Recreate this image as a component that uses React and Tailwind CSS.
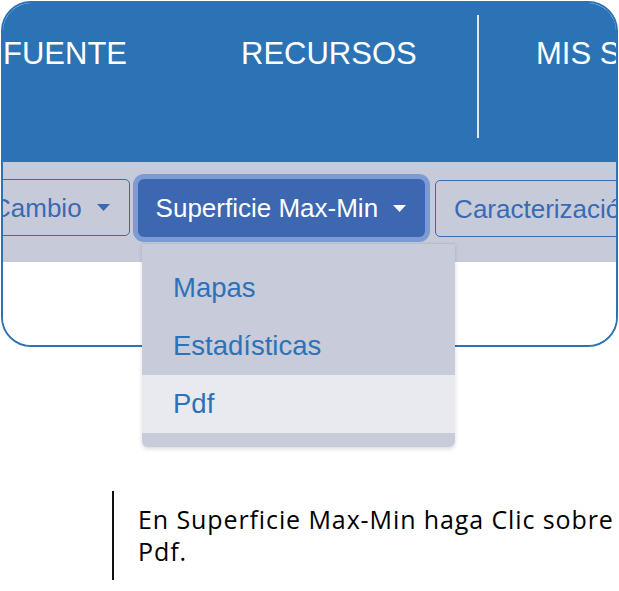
import React from 'react';

const Caret = ({ color }) => (
  <svg width="13" height="7" viewBox="0 0 13 7" className="shrink-0">
    <polygon points="0,0 13,0 6.5,7" fill={color} />
  </svg>
);

export default function App() {
  const menu = ['Mapas', 'Estadísticas', 'Pdf'];

  return (
    <div className="relative w-[619px] h-[591px] bg-white overflow-hidden font-['Liberation_Sans',Arial,sans-serif]">
      {/* tarjeta con el menú principal */}
      <div className="ml-[1px] mt-[1px] w-[617px] h-[346px] rounded-[30px] border-2 border-[#2a73b8] overflow-hidden flex flex-col">
        <div className="h-[159px] shrink-0 bg-[#2b73b4] flex items-start text-white text-[31px] leading-none whitespace-nowrap">
          <span className="w-[238px] shrink-0 mt-[35px]">FUENTE</span>
          <span className="w-[236px] shrink-0 mt-[35px]">RECURSOS</span>
          <span className="w-[2px] h-[123px] mt-[12px] bg-[#dfe8f2] shrink-0"></span>
          <span className="ml-[57px] shrink-0 mt-[35px]">MIS SISTEMAS</span>
        </div>

        <div className="h-[100px] shrink-0 bg-[#c7cbd9] flex items-start whitespace-nowrap text-[26px] leading-none">
          <button className="mt-[17px] -ml-[30px] h-[57px] flex items-center pl-[18px] pr-[19px] border border-[#3d68b2] rounded-[5px] text-[#3b69b3] shrink-0 font-['Liberation_Sans',Arial,sans-serif]">
            <span>Cambio</span>
            <span className="ml-[15px]"><Caret color="#3b69b3" /></span>
          </button>
          <button className="mt-[17px] ml-[8px] h-[58px] flex items-center pl-[18px] pr-[19px] bg-[#3d67b1] rounded-[6px] text-white shadow-[0_0_0_5px_#7b9bd5] shrink-0 font-['Liberation_Sans',Arial,sans-serif]">
            <span>Superficie Max-Min</span>
            <span className="ml-[15px]"><Caret color="#ffffff" /></span>
          </button>
          <button className="mt-[18px] ml-[10px] h-[57px] flex items-center pl-[18px] pr-[19px] border border-[#3d68b2] rounded-[5px] text-[#3b69b3] shrink-0 font-['Liberation_Sans',Arial,sans-serif]">
            <span>Caracterización</span>
            <span className="ml-[15px]"><Caret color="#3b69b3" /></span>
          </button>
        </div>

        <div className="flex-1 bg-white"></div>
      </div>

      {/* menú desplegable */}
      <div className="absolute left-[142px] top-[243px] w-[313px] h-[204px] bg-[#c7cbda] rounded-b-[6px] border-t border-[#b7bccb] shadow-[0_2px_4px_rgba(0,0,0,0.15)] pt-[15px]">
        {menu.map((item) => (
          <div
            key={item}
            className={`h-[58px] flex items-center pl-[31px] text-[27.5px] leading-none text-[#2d72b6] ${item === 'Pdf' ? 'bg-[#e9eaef]' : ''}`}
          >
            {item}
          </div>
        ))}
      </div>

      {/* instrucción */}
      <div className="absolute left-[112px] top-[491px] flex">
        <div className="w-[2px] h-[89px] bg-[#111]"></div>
        <p className="ml-[24px] mt-[12px] text-[25px] leading-[32px] tracking-[0.9px] text-black font-['Open_Sans',sans-serif] whitespace-nowrap">
          En Superficie Max-Min haga Clic sobre
          <br />
          Pdf.
        </p>
      </div>
    </div>
  );
}
